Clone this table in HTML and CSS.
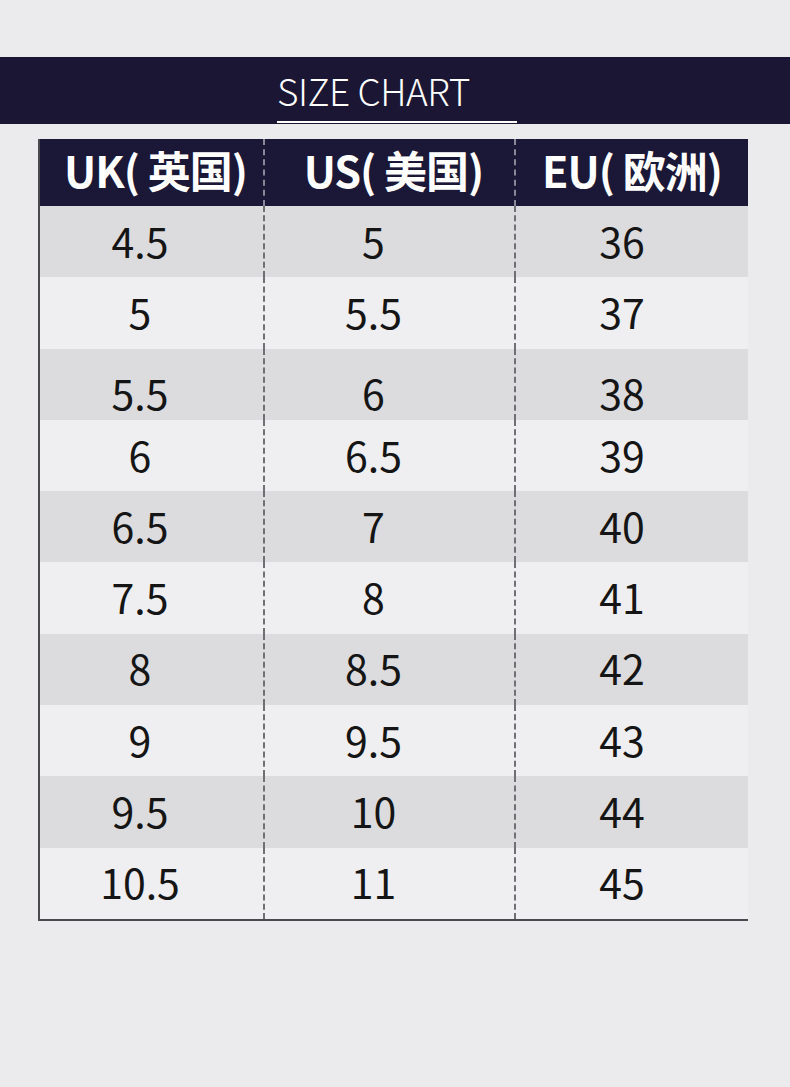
FILE: index.html
```html
<!DOCTYPE html>
<html lang="zh">
<head>
<meta charset="utf-8">
<title>Size Chart</title>
<link rel="stylesheet" href="styles.css">
</head>
<body>
<div class="page">
  <header class="banner">
    <div class="title-wrap"><h1 class="title">SIZE CHART</h1></div>
  </header>
  <div class="chart">
    <div class="cell head c1">UK( 英国)</div>
    <div class="cell head c2">US( 美国)</div>
    <div class="cell head c3">EU( 欧洲)</div>

    <div class="cell odd c1">4.5</div><div class="cell odd c2">5</div><div class="cell odd c3">36</div>
    <div class="cell even c1">5</div><div class="cell even c2">5.5</div><div class="cell even c3">37</div>
    <div class="cell odd low c1">5.5</div><div class="cell odd low c2">6</div><div class="cell odd low c3">38</div>
    <div class="cell even c1">6</div><div class="cell even c2">6.5</div><div class="cell even c3">39</div>
    <div class="cell odd c1">6.5</div><div class="cell odd c2">7</div><div class="cell odd c3">40</div>
    <div class="cell even c1">7.5</div><div class="cell even c2">8</div><div class="cell even c3">41</div>
    <div class="cell odd c1">8</div><div class="cell odd c2">8.5</div><div class="cell odd c3">42</div>
    <div class="cell even c1">9</div><div class="cell even c2">9.5</div><div class="cell even c3">43</div>
    <div class="cell odd c1">9.5</div><div class="cell odd c2">10</div><div class="cell odd c3">44</div>
    <div class="cell even c1">10.5</div><div class="cell even c2">11</div><div class="cell even c3">45</div>
  </div>
</div>
</body>
</html>
```

FILE: styles.css
```css
html, body {
  margin: 0;
  padding: 0;
  background: #ebebed;
}

.page {
  padding-top: 57px;
  font-family: "Noto Sans CJK SC", "Noto Sans", sans-serif;
}

.banner {
  height: 67px;
  background: #1a1633;
  display: flex;
  justify-content: center;
  align-items: flex-end;
}

.title-wrap {
  width: 240px;
  margin-left: 4px;
  border-bottom: 2px solid #ffffff;
  margin-bottom: 1px;
}

.title {
  margin: 0;
  font-size: 37px;
  font-weight: 300;
  line-height: 62px;
  color: #ffffff;
  letter-spacing: -0.5px;
  white-space: nowrap;
}

.chart {
  margin: 15px 0 0 38px;
  width: 710px;
  display: grid;
  grid-template-columns: 223px 251px 234px;
  grid-template-rows: 67px;
  grid-auto-rows: 71.3px;
  border-left: 2px solid #4a4a4e;
  border-bottom: 2px solid #4a4a4e;
  box-sizing: border-box;
}

.cell {
  display: flex;
  align-items: center;
  justify-content: center;
  font-size: 41px;
  color: #151515;
  line-height: 1;
  box-sizing: border-box;
  padding-bottom: 3px;
}

.cell.c2, .cell.c3 {
  border-left: 2px dashed #707074;
}

.head {
  background: #1b1736;
  color: #ffffff;
  font-weight: 700;
  font-size: 43px;
  letter-spacing: -1px;
  white-space: nowrap;
  padding-bottom: 6px;
}

.head.c1 { padding-left: 8px; }
.head.c2 { padding-left: 8px; border-left-color: #8a8898; }
.head.c3 { padding-left: 0; border-left-color: #8a8898; }

.odd { background: #dcdcde; }
.even { background: #efeff1; }

.odd.c1, .even.c1 { padding-right: 23px; }
.odd.c2, .even.c2 { padding-right: 32px; }
.odd.c3, .even.c3 { padding-right: 20px; }

.cell.low { padding-top: 16px; padding-bottom: 0; }
```
